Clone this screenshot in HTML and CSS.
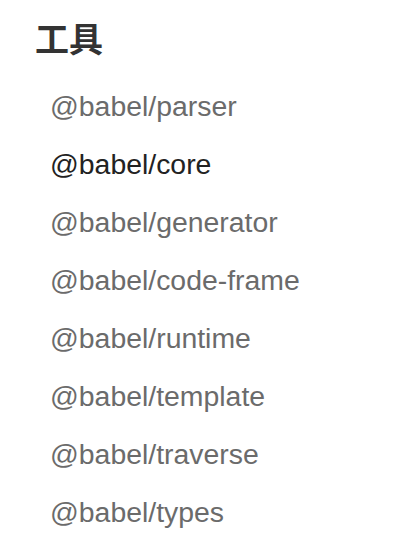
FILE: index.html
```html
<!DOCTYPE html>
<html lang="zh">
<head>
<meta charset="utf-8">
<link rel="stylesheet" href="styles.css">
</head>
<body>
<nav class="sidebar">
  <h2 class="title">工具</h2>
  <ul class="list">
    <li class="item">@babel/parser</li>
    <li class="item active">@babel/core</li>
    <li class="item">@babel/generator</li>
    <li class="item">@babel/code-frame</li>
    <li class="item">@babel/runtime</li>
    <li class="item">@babel/template</li>
    <li class="item">@babel/traverse</li>
    <li class="item">@babel/types</li>
  </ul>
</nav>
</body>
</html>
```
FILE: styles.css
```css
html, body {
  margin: 0;
  padding: 0;
  background: #ffffff;
}
body {
  font-family: "Liberation Sans", "Noto Sans CJK SC", sans-serif;
}
.sidebar {
  padding: 18px 0 0 35px;
}
.title {
  margin: 0;
  font-family: "Noto Sans CJK SC", sans-serif;
  font-size: 34px;
  font-weight: 700;
  line-height: 40px;
  color: #333333;
}
.list {
  list-style: none;
  margin: 0;
  padding: 19px 0 0 15px;
  display: flex;
  flex-direction: column;
}
.item {
  font-size: 28.4px;
  line-height: 58px;
  color: #6b6b6b;
}
.item.active {
  color: #222222;
}
```
